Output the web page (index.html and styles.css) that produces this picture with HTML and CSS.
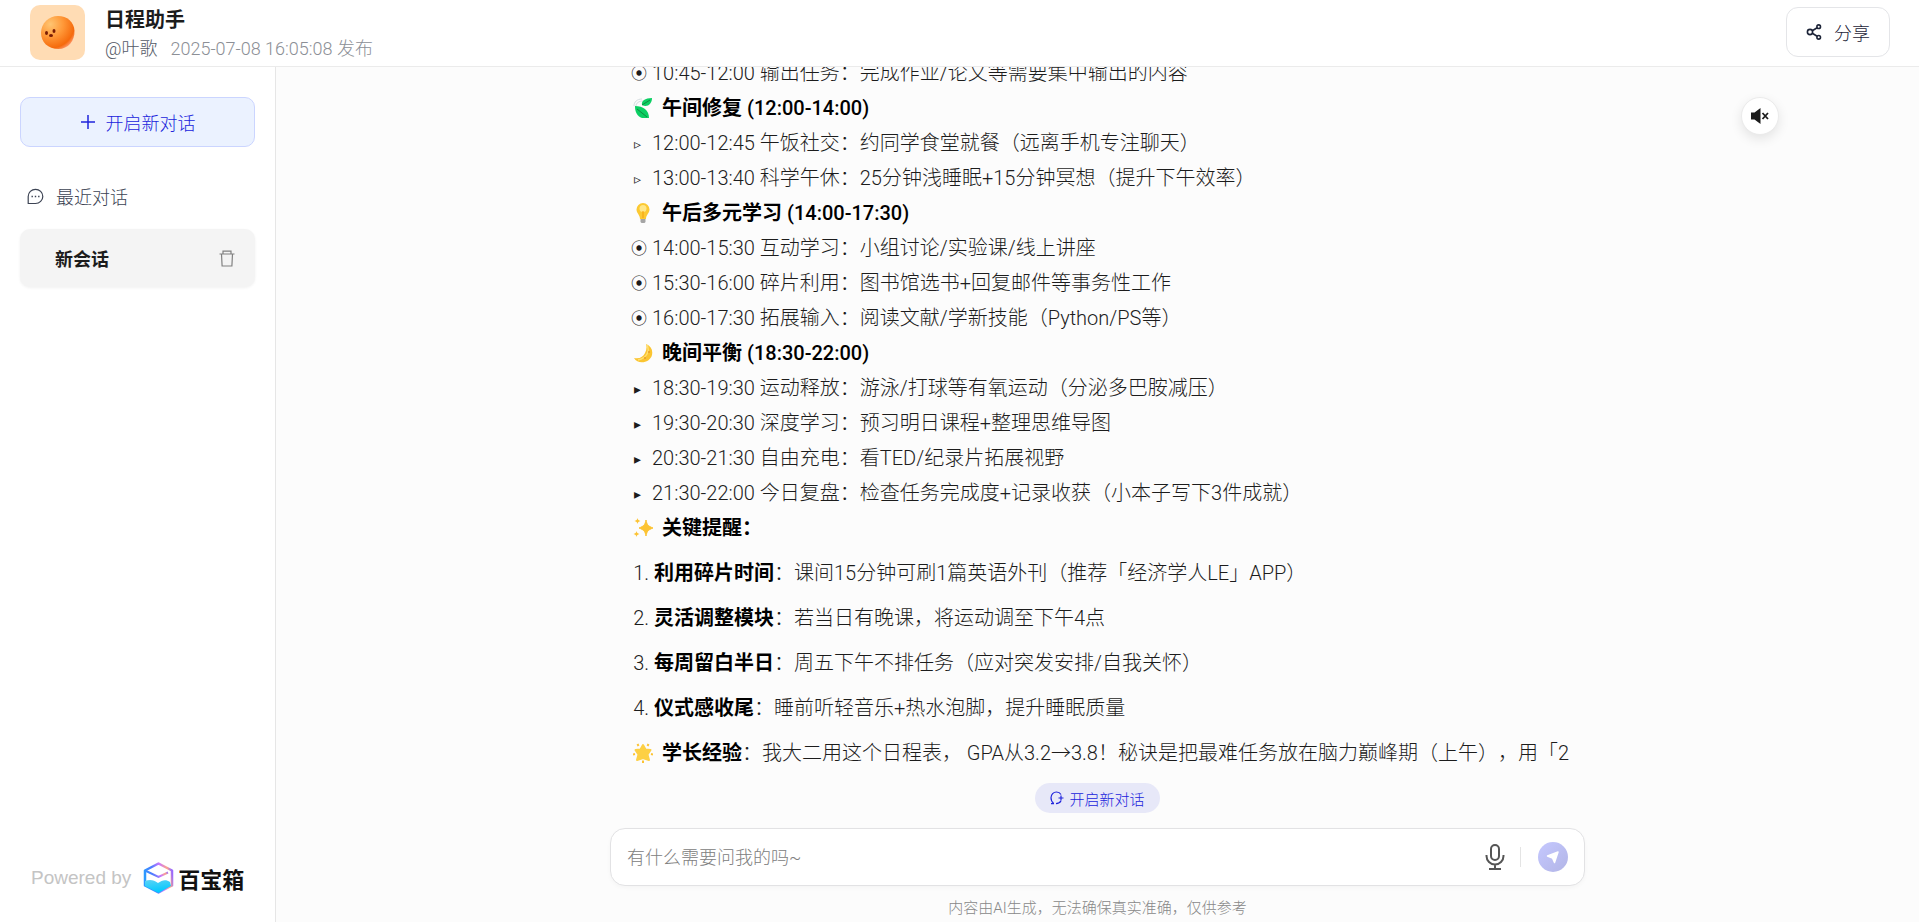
FILE: index.html
```html
<!DOCTYPE html>
<html lang="zh-CN">
  <head>
    <meta charset="UTF-8" />
    <meta name="viewport" content="width=device-width, initial-scale=1.0" />
    <title>日程助手</title>
    <link rel="stylesheet" href="styles.css">
  </head>
  <body>
    <header class="header">
      <svg class="avatar" viewBox="0 0 55 55" aria-hidden="true">
        <defs>
          <radialGradient id="ball" cx="0.28" cy="0.25" r="0.85">
            <stop offset="0" stop-color="#ffc572" />
            <stop offset="0.45" stop-color="#ff9838" />
            <stop offset="0.85" stop-color="#f56a0c" />
            <stop offset="1" stop-color="#ff9a70" />
          </radialGradient>
        </defs>
        <rect width="55" height="55" rx="10" fill="#ffdcb4" />
        <path d="M28 11c9 0 16 6 16.500 14.500C45 36 38 44 28.500 44 18 44 11 37 11 28c0-10 8-17 17-17z" fill="url(#ball)" />
        <ellipse cx="16.500" cy="28" rx="1.500" ry="2" fill="#7a1c04" />
        <ellipse cx="24" cy="26" rx="1.500" ry="2" fill="#7a1c04" />
        <ellipse cx="21" cy="30.500" rx="2" ry="1.500" fill="#7a1c04" />
      </svg>
      <div class="app-info">
        <h1 class="app-name">日程助手</h1>
        <p class="app-meta"><span class="author">@叶歌</span><span>2025-07-08 16:05:08 发布</span></p>
      </div>
      <button class="btn-share" type="button">
        <svg width="16" height="16" viewBox="0 0 16 16" fill="none" stroke="currentColor" stroke-width="1.600" aria-hidden="true">
          <circle cx="4" cy="8" r="2.600" />
          <circle cx="12.700" cy="2.700" r="1.800" />
          <circle cx="12.700" cy="13.300" r="1.800" />
          <path d="M6.300 6.700l4.800-3M6.300 9.300l4.800 3" />
        </svg>
        分享
      </button>
    </header>

    <div class="layout">
      <aside class="sidebar">
        <button class="btn-new" type="button">
          <svg width="16" height="16" viewBox="0 0 16 16" fill="none" stroke="currentColor" stroke-width="1.500" aria-hidden="true">
            <path d="M8 1v14M1 8h14" />
          </svg>
          开启新对话
        </button>
        <h2 class="recent">
          <svg width="17" height="17" viewBox="0 0 17 17" fill="none" stroke="currentColor" stroke-width="1.200" aria-hidden="true">
            <path d="M1.200 15.200V8.400a7.300 7.100 0 1 1 7.300 7.100H1.200z" stroke-linejoin="round" />
            <path d="M4.500 8.500h1.400M7.800 8.500h1.400M11.100 8.500h1.400" stroke-width="1.500" />
          </svg>
          最近对话
        </h2>
        <div class="session">
          <a class="session-name" href="#">新会话</a>
          <button class="btn-delete" type="button" aria-label="删除">
            <svg width="16" height="17" viewBox="0 0 16 17" fill="none" stroke="currentColor" stroke-width="1.200" aria-hidden="true">
              <path d="M.5 4h15M4 4V1.200h8V4M2.500 4l.6 12h9.800l.6-12" />
            </svg>
          </button>
        </div>
        <div class="powered">
          <span>Powered by</span>
          <svg width="31" height="32" viewBox="0 0 31 32" aria-hidden="true">
            <defs>
              <linearGradient id="edge" x1="0" y1="0.500" x2="1" y2="0.300">
                <stop offset="0" stop-color="#2b9bff" />
                <stop offset="0.300" stop-color="#4d7cff" />
                <stop offset="0.600" stop-color="#c978ff" />
                <stop offset="0.850" stop-color="#ffa488" />
                <stop offset="1" stop-color="#9a6bff" />
              </linearGradient>
              <linearGradient id="water" x1="0" y1="0" x2="0.300" y2="1">
                <stop offset="0" stop-color="#5cd3f5" />
                <stop offset="1" stop-color="#00c8ff" />
              </linearGradient>
            </defs>
            <path d="M15.500 1.500L29 8.500v15l-13.500 7L2 23.500v-15z" fill="#fff" stroke="url(#edge)" stroke-width="2.500" stroke-linejoin="round" />
            <path d="M2 19c5-2 9-1 13 2 4-3 8-4 12-1l1 4-12.500 7L2 24z" fill="url(#water)" />
            <path d="M2 8.500l13.500 6.500L25 10.500" fill="none" stroke="url(#edge)" stroke-width="2" />
          </svg>
          <strong class="brand">百宝箱</strong>
        </div>
      </aside>

      <main class="chat">
        <button class="btn-mute" type="button" aria-label="静音">
          <svg width="18" height="16" viewBox="0 0 18 16" aria-hidden="true">
            <path d="M0 4.500h3.500L9.500 0v16l-6-4.500H0z" fill="#1c1c1c" />
            <path d="M11.500 5l5.500 6M17 5l-5.500 6" stroke="#1c1c1c" stroke-width="1.800" />
          </svg>
        </button>

        <div class="messages">
          <div class="message">
            <p><span class="bullet dot">⦿</span>10:45-12:00 输出任务：完成作业/论文等需要集中输出的内容</p>
            <p class="title">
              <svg class="emoji" viewBox="0 0 20 20" aria-hidden="true">
                <path d="M1 8C1 4 4 1 9 1M3 8c0-3 3-5 7-5" fill="none" stroke="#d5dde0" stroke-width="1" />
                <path d="M19 0C12 0 8 3 9 7c5 3 10-1 10-7z" fill="#0bcf63" />
                <path d="M2 8c8 0 14 4 14 12H9C4 18 2 14 2 8z" fill="#0bcf63" />
                <path d="M9 7l8-5M4 11l10 8" fill="none" stroke="#12883f" stroke-width="1" />
              </svg><strong>午间修复</strong> (12:00-14:00)
            </p>
            <p><span class="bullet">▹</span>12:00-12:45 午饭社交：约同学食堂就餐（远离手机专注聊天）</p>
            <p><span class="bullet">▹</span>13:00-13:40 科学午休：25分钟浅睡眠+15分钟冥想（提升下午效率）</p>
            <p class="title">
              <svg class="emoji" viewBox="0 0 20 20" aria-hidden="true">
                <path d="M10 0a6.500 6.500 0 0 0-6.500 6.500C3.500 10 7 12 7 16h6c0-4 3.500-6 3.500-9.500A6.500 6.500 0 0 0 10 0z" fill="#fcc932" />
                <circle cx="10" cy="5.500" r="3.500" fill="#ffe788" />
                <path d="M10 8v7" stroke="#f59e0b" stroke-width="1" />
                <path d="M7.500 16h5v3l-1 1h-3l-1-1z" fill="#a5a5a5" />
              </svg><strong>午后多元学习</strong> (14:00-17:30)
            </p>
            <p><span class="bullet dot">⦿</span>14:00-15:30 互动学习：小组讨论/实验课/线上讲座</p>
            <p><span class="bullet dot">⦿</span>15:30-16:00 碎片利用：图书馆选书+回复邮件等事务性工作</p>
            <p><span class="bullet dot">⦿</span>16:00-17:30 拓展输入：阅读文献/学新技能（Python/PS等）</p>
            <p class="title">
              <svg class="emoji" viewBox="0 0 20 20" aria-hidden="true">
                <path d="M13 1c5 2 7 6 6 11-2 8-14 10-18 3 6 1 9-1 11-5 1.500-3 2-6 1-9z" fill="#fbc531" />
                <path d="M14 2c3 6 0 13-9 15" fill="none" stroke="#ffdf72" stroke-width="1.500" />
                <circle cx="16" cy="9" r="1" fill="#e69d2c" />
                <circle cx="12" cy="15" r="1" fill="#e69d2c" />
              </svg><strong>晚间平衡</strong> (18:30-22:00)
            </p>
            <p><span class="bullet">▸</span>18:30-19:30 运动释放：游泳/打球等有氧运动（分泌多巴胺减压）</p>
            <p><span class="bullet">▸</span>19:30-20:30 深度学习：预习明日课程+整理思维导图</p>
            <p><span class="bullet">▸</span>20:30-21:30 自由充电：看TED/纪录片拓展视野</p>
            <p><span class="bullet">▸</span>21:30-22:00 今日复盘：检查任务完成度+记录收获（小本子写下3件成就）</p>
            <p class="title">
              <svg class="emoji" viewBox="0 0 20 20" fill="#fcc332" aria-hidden="true">
                <path d="M13 2c1 5 2 6 7 8-5 2-6 3-7 8-1-5-2-6-7-8 5-2 6-3 7-8z" stroke="#fcc332" stroke-width="1" />
                <path d="M4.500 0c.5 2 1 2.500 3 3-2 .5-2.500 1-3 3-.5-2-1-2.500-3-3 2-.5 2.500-1 3-3zM3.500 13c.5 2 1 2.500 3 3-2 .5-2.500 1-3 3-.5-2-1-2.500-3-3 2-.5 2.500-1 3-3z" />
              </svg><strong>关键提醒：</strong>
            </p>
            <ol class="tips">
              <li><strong>利用碎片时间</strong>：课间15分钟可刷1篇英语外刊（推荐「经济学人LE」APP）</li>
              <li><strong>灵活调整模块</strong>：若当日有晚课，将运动调至下午4点</li>
              <li><strong>每周留白半日</strong>：周五下午不排任务（应对突发安排/自我关怀）</li>
              <li><strong>仪式感收尾</strong>：睡前听轻音乐+热水泡脚，提升睡眠质量</li>
            </ol>
            <p>
              <svg class="emoji" viewBox="0 0 20 20" aria-hidden="true">
                <path d="M10 2l2.500 4.500 5 .5-3 4.500 1.500 5.500-6-2-6 2L5.500 11.500 2.500 7l5-.5z" fill="#fdd044" stroke="#fdd044" stroke-width="2" stroke-linejoin="round" />
                <path d="M4.500 1l1 2M15.500 1l-1 2M0 11.500l2-.5M20 11.500l-2-.5M10 17.500V20" stroke="#fcc332" stroke-width="2" />
              </svg><strong>学长经验</strong>：我大二用这个日程表， GPA从3.2→3.8！秘诀是把最难任务放在脑力巅峰期（上午），用「2
            </p>
          </div>
        </div>

        <button class="btn-restart" type="button">
          <svg width="14" height="14" viewBox="0 0 14 14" fill="none" stroke="currentColor" stroke-width="1.200" aria-hidden="true">
            <path d="M11 3.500C10 1.800 8.500 1 6.500 1 3.500 1 1 3.500 1 6.800c0 2.400 1 4.200 2.500 5.200M1 12.600h3M6 12.600c2.500 0 4.200-1 5-2.800" />
            <path d="M11 4.500v5M8.500 7h5" />
          </svg>
          开启新对话
        </button>

        <form class="composer">
          <input class="composer-input" type="text" aria-label="消息" placeholder="有什么需要问我的吗~" />
          <button class="btn-mic" type="button" aria-label="语音输入">
            <svg width="20" height="26" viewBox="0 0 20 26" fill="none" stroke="#555" stroke-width="2" aria-hidden="true">
              <rect x="6" y="1" width="8" height="15" rx="4" />
              <path d="M1.500 11v1a8.500 8.500 0 0 0 17 0v-1M10 20.500V25M4 25h12" />
            </svg>
          </button>
          <span class="divider"></span>
          <button class="btn-send" type="submit" aria-label="发送">
            <svg width="14" height="14" viewBox="0 0 14 14" aria-hidden="true">
              <path d="M12 2L8.500 12.500 6.500 8 1.500 6z" fill="#fff" stroke="#fff" stroke-width="1.500" stroke-linejoin="round" />
            </svg>
          </button>
        </form>
        <p class="disclaimer">内容由AI生成，无法确保真实准确，仅供参考</p>
      </main>
    </div>
  </body>
</html>
```
FILE: styles.css
```css
* {
  box-sizing: border-box;
}

body {
  display: flex;
  flex-direction: column;
  height: 100vh;
  margin: 0;
  background-color: #fff;
  color: #1c1c1c;
  font-family: Roboto, 'Noto Sans CJK SC', sans-serif;
  font-size: 18px;
  font-weight: 300;
}

h1,
h2,
p,
ol {
  margin: 0;
  padding: 0;
}

button {
  display: flex;
  align-items: center;
  justify-content: center;
  padding: 0;
  border: none;
  background: none;
  font: inherit;
  color: inherit;
  cursor: pointer;
}

/* header */
.header {
  display: flex;
  flex-shrink: 0;
  height: 67px;
  padding: 5px 29px 0 30px;
  border-bottom: 1px solid #ebebeb;
}

.avatar {
  width: 55px;
  height: 55px;
}

.app-info {
  flex: 1;
  margin-left: 20px;
}

.app-name {
  font-size: 20px;
  font-weight: 700;
  line-height: 30px;
}

.app-meta {
  display: flex;
  gap: 13px;
  line-height: 28px;
  color: #8c8f96;
}

.author {
  color: #555b68;
}

.btn-share {
  gap: 12px;
  height: 50px;
  margin-top: 2px;
  padding: 0 19px;
  border: 1px solid #e4e5e8;
  border-radius: 12px;
  color: #1d2438;
}

/* sidebar */
.layout {
  display: flex;
  flex: 1;
  min-height: 0;
}

.sidebar {
  display: flex;
  flex-direction: column;
  width: 276px;
  padding: 30px 20px 28px;
  border-right: 1px solid #e6e6e6;
}

.btn-new {
  gap: 10px;
  height: 50px;
  border: 1px solid #cbd5ff;
  border-radius: 10px;
  background-color: #ebf2ff;
  color: #2024dc;
}

.recent {
  display: flex;
  align-items: center;
  gap: 12px;
  height: 58px;
  margin: 20px 0 4px;
  padding-left: 7px;
  font-size: 18px;
  font-weight: 300;
  color: #3c4353;
}

.session {
  display: flex;
  align-items: center;
  justify-content: space-between;
  height: 58px;
  padding: 0 20px 0 35px;
  border-radius: 10px;
  background-color: #f4f4f4;
  box-shadow: 0 1px 3px rgba(0, 0, 0, 0.06);
}

.session-name {
  font-weight: 700;
  color: #1c1c1c;
  text-decoration: none;
}

.btn-delete {
  color: #808080;
}

.powered {
  display: flex;
  align-items: center;
  margin-top: auto;
  padding-left: 11px;
  font-family: 'Liberation Sans', 'Noto Sans CJK SC', sans-serif;
  font-size: 19px;
  color: #c4c4c4;
}

.powered svg {
  margin: 0 4px 0 12px;
}

.brand {
  font-family: 'Noto Sans CJK SC', sans-serif;
  font-size: 22px;
  font-weight: 700;
  line-height: 32px;
  color: #111;
}

/* chat */
.chat {
  display: flex;
  flex: 1;
  flex-direction: column;
  align-items: center;
  position: relative;
  min-width: 0;
  background-color: #fcfcfc;
}

.btn-mute {
  position: absolute;
  top: 30px;
  right: 140px;
  width: 38px;
  height: 38px;
  border: 1px solid #ebebeb;
  border-radius: 50%;
  background-color: #fff;
  box-shadow: 0 4px 12px rgba(0, 0, 0, 0.1);
}

.messages {
  display: flex;
  flex: 1;
  flex-direction: column;
  justify-content: flex-end;
  width: 100%;
  max-width: 975px;
  min-height: 0;
  padding: 0 0 12px 21px;
  overflow: hidden;
}

.message {
  font-size: 20px;
  line-height: 35px;
  text-spacing-trim: space-all;
}

.bullet {
  display: inline-block;
  width: 21px;
  padding-left: 3px;
  font-family: 'DejaVu Sans', sans-serif;
  font-size: 14px;
  line-height: 20px;
  vertical-align: 1px;
}

.dot {
  padding-left: 0;
  font-size: 16px;
}

.title {
  color: #000;
  font-weight: 500;
}

.message strong {
  color: #000;
  font-weight: 700;
}

.emoji {
  width: 20px;
  height: 20px;
  margin: 0 9px 0 2px;
  vertical-align: -3px;
}

.tips {
  padding-left: 23px;
}

.tips li {
  margin: 10px 0;
}

.btn-restart {
  gap: 5px;
  height: 30px;
  margin-bottom: 15px;
  padding: 0 15px;
  border-radius: 15px;
  background-color: #e7e8f8;
  font-size: 15px;
  color: #2024dc;
}

.composer {
  display: flex;
  align-items: center;
  width: 100%;
  max-width: 975px;
  height: 58px;
  padding: 0 16px;
  border: 1px solid #e2e2e4;
  border-radius: 15px;
  background-color: #fff;
  box-shadow: 0 2px 4px rgba(0, 0, 0, 0.03);
}

.composer-input {
  flex: 1;
  min-width: 0;
  padding: 0;
  border: none;
  outline: none;
  background: none;
  font: inherit;
}

.composer-input::placeholder {
  color: #808080;
}

.divider {
  width: 1px;
  height: 20px;
  margin: 0 17px 0 15px;
  background-color: #e4e4e4;
}

.btn-send {
  width: 30px;
  height: 30px;
  border-radius: 50%;
  background: linear-gradient(135deg, #c5c8ff, #b2b5e6);
}

.disclaimer {
  margin: 11px 0 3px;
  font-size: 15px;
  line-height: 22px;
  color: #888;
}
```
